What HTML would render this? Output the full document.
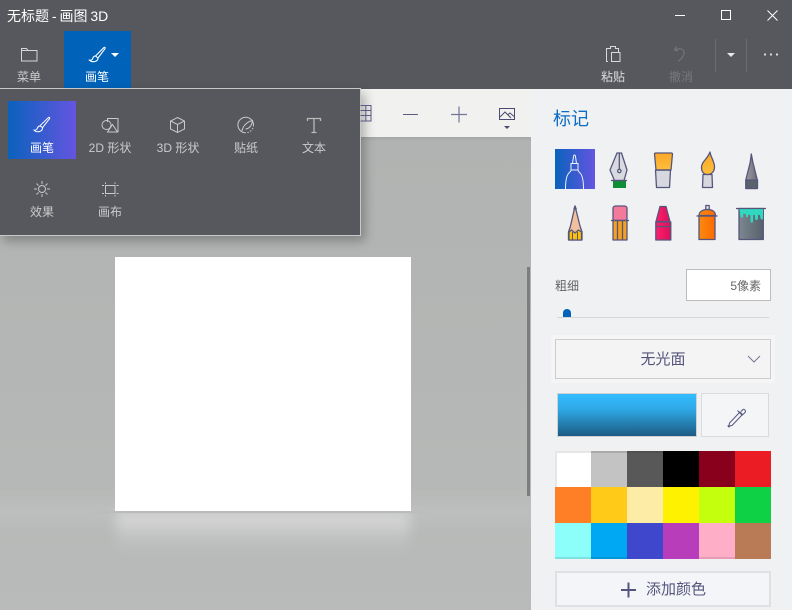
<!DOCTYPE html>
<html lang="zh">
<head>
<meta charset="utf-8">
<title>无标题 - 画图 3D</title>
<style>
html,body{margin:0;padding:0;width:792px;height:610px;overflow:hidden;background:#f0f1f3}
body{position:relative;font-family:"Liberation Sans","Noto Sans CJK SC",sans-serif;font-size:12px}
.a{position:absolute}
.t{position:absolute;white-space:nowrap;line-height:16px;height:16px}
.c{transform:translateX(-50%)}
.l{color:#cbcbcd}
</style>
</head>
<body>
<!-- canvas area -->
<div class="a" style="left:0;top:137px;width:531px;height:473px;overflow:hidden;background:linear-gradient(#b1b3b2,#b5b7b6 60%,#b9bbba)">
<div class="a" style="left:-20px;top:350px;width:571px;height:50px;background:linear-gradient(rgba(255,255,255,0),rgba(255,255,255,.09) 50%,rgba(255,255,255,0));filter:blur(5px)"></div>
<div class="a" style="left:116px;top:375px;width:294px;height:42px;background:linear-gradient(rgba(232,232,232,.7),rgba(215,215,215,.35) 55%,rgba(200,200,200,0));filter:blur(6px)"></div>
</div>
<div class="a" style="left:90px;top:511px;width:345px;height:2px;background:linear-gradient(90deg,rgba(170,170,170,0),#b9b9b8 10%,#b9b9b8 90%,rgba(170,170,170,0))"></div>
<div class="a" style="left:115px;top:257px;width:296px;height:254px;background:#fff"></div>
<div class="a" style="left:527px;top:267px;width:3px;height:229px;background:#7c7e7d"></div>
<!-- toolbar -->
<div class="a" style="left:360px;top:89px;width:171px;height:48px;background:#f1f1f0"></div>
<div class="a" style="left:360px;top:137px;width:171px;height:4px;background:linear-gradient(#a5a7a6,#b1b3b2)"></div>
<!-- top bar -->
<div class="a" style="left:0;top:0;width:792px;height:89px;background:#57585d"></div>
<div class="a" style="left:64px;top:31px;width:67px;height:57px;background:#0062b8"></div>
<!-- side panel -->
<div class="a" style="left:531px;top:89px;width:261px;height:521px;background:#f0f1f3"></div>
<!-- flyout -->
<div class="a" style="left:-1px;top:88px;width:360px;height:146px;background:#57585d;border:1px solid #c9c9c9;box-shadow:4px 5px 10px rgba(0,0,0,.28)"></div>
<div class="a" style="left:8px;top:101px;width:68px;height:58px;background:linear-gradient(90deg,#0a62bd,#6455e0)"></div>
<!-- right controls -->
<div class="a" style="left:686px;top:269px;width:83px;height:30px;background:#fff;border:1px solid #bcbcbc"></div>
<div class="a" style="left:557px;top:317px;width:212px;height:1px;background:#d5d6d9"></div>
<div class="a" style="left:563px;top:309px;width:8px;height:8px;background:#0062b8;border-radius:4px 4px 0 0"></div>
<div class="a" style="left:551px;top:335px;width:224px;height:48px;background:#f5f5f6"></div>
<div class="a" style="left:555px;top:339px;width:214px;height:38px;border:1px solid #cdcdcd;background:#f4f4f5"></div>
<div class="a" style="left:557px;top:393px;width:138px;height:42px;border:1px solid #cfd0d2;background:linear-gradient(#33bcff,#2fa9e8 35%,#2686b8 65%,#1c5a85)"></div>
<div class="a" style="left:701px;top:393px;width:66px;height:42px;border:1px solid #d9dadc;background:#f4f5f7"></div>
<!-- palette -->
<div class="a" style="left:555px;top:451px;width:216px;height:108px;display:grid;grid-template-columns:repeat(6,36px);grid-template-rows:repeat(3,36px)">
<div style="background:#fff;border:2px solid #e6e6e7;border-right:0;border-bottom:0"></div><div style="background:#c3c3c3;border-top:2px solid #aaa"></div><div style="background:#585858;border-top:2px solid #4f4f4f"></div><div style="background:#000"></div><div style="background:#88001b"></div><div style="background:#ec1c24"></div>
<div style="background:#ff7f27"></div><div style="background:#ffca18"></div><div style="background:#fdeca6"></div><div style="background:#fff200"></div><div style="background:#c4ff0e"></div><div style="background:#0ed145"></div>
<div style="background:#8cfffb;border-bottom:2px solid #7de3e0"></div><div style="background:#00a8f3;border-bottom:2px solid #0096d9"></div><div style="background:#3f48cc"></div><div style="background:#b83dba"></div><div style="background:#ffaec8;border-bottom:2px solid #e59cb4"></div><div style="background:#b97a56"></div>
</div>
<div class="a" style="left:555px;top:571px;width:212px;height:32px;border:2px solid #dfe0e3;background:#f4f5f8"></div>

<!-- icons -->
<svg class="a" style="left:0;top:0" width="792" height="610" viewBox="0 0 792 610" fill="none">
<defs>
<linearGradient id="g1" x1="0" x2="1"><stop offset="0" stop-color="#0a62bd"/><stop offset="1" stop-color="#6455e0"/></linearGradient>
<linearGradient id="y" x1="0" y1="0" x2="0" y2="1"><stop offset="0" stop-color="#f9a825"/><stop offset="1" stop-color="#ffbe3d"/></linearGradient>
<linearGradient id="gr" x1="0" x2="1"><stop offset="0" stop-color="#9a9aa2"/><stop offset="1" stop-color="#6d6d76"/></linearGradient>
<linearGradient id="bk" x1="0" x2="1"><stop offset="0" stop-color="#7c8790"/><stop offset="1" stop-color="#57606b"/></linearGradient>
<linearGradient id="pk" x1="0" x2="1"><stop offset="0" stop-color="#ff1f6d"/><stop offset="1" stop-color="#d9105a"/></linearGradient>
<linearGradient id="or" x1="0" x2="1"><stop offset="0" stop-color="#f98a10"/><stop offset="1" stop-color="#ff6a00"/></linearGradient>
</defs>
<!-- window buttons -->
<g stroke="#fff" stroke-width="1">
<path d="M675 15.5h10"/><rect x="721.5" y="10.500" width="9" height="9"/><path d="M767.500 10.500l10 10M777.500 10.500l-10 10"/>
</g>
<!-- folder -->
<path d="M21.500 48.500h5l1.500 2h9v10.500h-15.500z" stroke="#d6d6d8"/>
<path d="M21.500 50.500h6.500" stroke="#d6d6d8"/>
<!-- main brush -->
<g stroke="#fff" stroke-width="1.100">
<path d="M104 47.500c1 -.5 1.500 .2 1 1.200l-7 9.300-2.500-2z"/><path d="M95.500 56c-2 0-2.500 1.500-3 3-.3 1-1 1.200-3 1.200 1.500 1.500 3.500 1.800 5.500 1.300s3-2 3-3.500"/>
</g>
<path d="M111 53h8l-4 4z" fill="#fff"/>
<!-- paste -->
<g stroke="#d9d9db" stroke-width="1">
<path d="M608 61.500h-1.500v-13h4v-2h5v2h3v4"/><rect x="611.500" y="52.500" width="8.500" height="9"/>
</g>
<!-- undo -->
<path d="M676.500 46.500l-2 3.500 3.800 .8M674.800 50c3-2 8.200-1.800 9.200 1.500 .8 3-1.500 6.500-6 10" stroke="#77787c"/>
<path d="M715.500 39v33M746.500 39v33" stroke="#6b6c70"/>
<path d="M727 53h8l-4 4z" fill="#e8e8e8"/>
<g fill="#d8d8da"><rect x="764" y="53.500" width="2" height="2"/><rect x="770" y="53.500" width="2" height="2"/><rect x="776" y="53.500" width="2" height="2"/></g>
<!-- toolbar icons -->
<path d="M360.500 105.500h10.500v15.500h-10.500M360.500 110.500h10.500M360.500 115.500h10.500M365.800 105.500v15.500" stroke="#5b5a80"/>
<path d="M403 114.500h15" stroke="#5b5a80"/>
<path d="M451 114.500h16M459 106.500v16" stroke="#74739a" stroke-width="1.200"/>
<path d="M499.500 108.500h15v11h-15zM500 117l5-5 6 6M508 114.500l2-1.500 4 3.500" stroke="#4b4a72"/>
<path d="M504 126h6l-3 3z" fill="#4b4a72"/>
<!-- flyout icons -->
<g stroke="#fff" stroke-width="1">
<path d="M48.500 117.500c1-.5 1.500.2 1 1.200l-7 9-2.500-2z"/><path d="M40 126c-2 0-2.500 1.500-3 3-.3 1-1 1.200-3 1.200 1.500 1.500 3.500 1.800 5.500 1.300s3-2 3-3.500"/>
</g>
<g stroke="#c9c9cb" stroke-width="1">
<circle cx="106.500" cy="125" r="4.500"/><path d="M107.500 122v-3.500h10.500v13h-1M112.500 124.500l5 7.500h-10z"/>
<path d="M177.500 117.500l7 3.500v8l-7 3.500-7-3.500v-8zM170.500 121l7 3.500 7-3.500M177.500 124.500v8"/>
<path d="M253.500 125a7.800 7.800 0 1 0-7.800 7.800" /><path d="M253.500 125a7.800 7.800 0 0 1-7.800 7.800" stroke-dasharray="1.500 1.500"/><path d="M242 131c.5-4 4-9 10.500-10.500-.5 5-3.500 8.500-7 8.500" />
<path d="M307.500 121v-2.500h13v2.500M314 118.500v14M311.500 132.500h5" stroke="#b9b9bb" stroke-width="1.300"/>
<circle cx="42" cy="189" r="3.500"/><path d="M42 181v3M42 194v3M34 189h3M47 189h3M36.500 183.500l2 2M45.500 192.500l2 2M47.500 183.500l-2 2M38.500 192.500l-2 2"/>
<path d="M105.500 185.500h9.500v8h-9.500zM102 185.500h2M102 193.500h2M116.500 185.500h2M116.500 193.500h2M105.500 182.500v1.500M115 182.500v1.500M105.500 195v1.500M115 195v1.500"/>
</g>
<!-- markers -->
<rect x="555" y="149" width="40" height="40" fill="url(#g1)"/>
<g stroke="#fff" stroke-width="1" opacity=".92">
<path d="M565.500 189c0-7 1-13 3-15.500 1.500-1.500 2.500-2.500 2.500-3.500h7c0 1 1 2 2.500 3.500 2 2.500 3 8.500 3 15.500M571 170v-6.500h7v6.500M572.500 163.500l1-7c.3-2 1.700-2 2 0l1 7"/>
</g>
<g stroke="#56567c" stroke-width="1.300" stroke-linejoin="round">
<!-- fountain -->
<path d="M617 153h4.500l5.500 17-3 10.500h-9.500l-4.500-10.500z" fill="#d9d9e0"/>
<rect x="613" y="181" width="13" height="7" fill="#0f8f35" stroke="none"/>
<path d="M611 180.500h16"/>
<circle cx="619.300" cy="171" r="1.700" fill="#e8e8ee"/><path d="M619.300 153v16"/>
<!-- flat brush -->
<path d="M655.500 170h15l-1 17.500h-13z" fill="#d7d7e0"/>
<path d="M654.500 154c0-.5.500-1 1-1h16c.5 0 1 .5 1 1l-1.500 16h-15z" fill="url(#y)"/>
<path d="M655.500 170h15"/>
<!-- round brush -->
<path d="M703 174.500h9l.5 13h-10z" fill="#d7d7e0"/>
<path d="M710 152c.5 5 4.500 9 4.500 15 0 4.500-3 7.500-7 7.500s-6-3-6-7c0-6 6.500-9 8.500-15.500z" fill="url(#y)"/>
<!-- marker -->
<path d="M751.300 154l1.500 8 4.500 18v8.500h-11.500v-8.500l4.500-18z" fill="url(#gr)"/>
<path d="M746 180h11.500v8.500h-11.500z" fill="#5a626c"/>
<!-- pencil -->
<path d="M575 206l5 20 2 6v8h-13.500v-8l2-6z" fill="#f2c09c"/>
<path d="M574 209l1-3 1.200 3z" fill="#56567c"/>
<path d="M569 232l2.500-2 3.500 3 3.500-3 3 2v8h-12.500z" fill="#ffc107"/>
<path d="M572.500 232v8M577.500 232v8" stroke-width="1"/>
<!-- eraser pencil -->
<path d="M613 220.500v-12c0-1.500 1-2.500 2.500-2.500h9c1.500 0 2.500 1 2.500 2.500v12z" fill="#f47a9c"/>
<rect x="613" y="220.500" width="14" height="19.500" fill="#f5a020"/>
<path d="M611 220.500h18M617.500 221v19M622.500 221v19"/>
<!-- crayon -->
<path d="M660 206.500h6l4 15h-14z" fill="url(#pk)"/>
<rect x="655.800" y="222" width="15" height="18" fill="url(#pk)"/>
<path d="M656 226.500h15"/>
<!-- spray -->
<rect x="705.800" y="205.500" width="3.400" height="4" fill="#e8e8ee"/>
<path d="M699 215.500c0-4 4-6 8.500-6s8 2 8 6z" fill="url(#or)"/>
<rect x="699" y="216" width="16" height="23.500" fill="url(#or)"/>
<path d="M696.500 216h21"/>
<!-- bucket -->
<rect x="739" y="208.500" width="24.300" height="31" fill="url(#bk)"/>
<path d="M739.500 209h23.500v9.500c0 1.500-2 1.500-2.500 0l-.5-3c-.5-1-2-1-2 0v3c0 2-3 2-3 0v-3c0-1-2-1-2 0v6c0 1.500-2.500 1.500-2.500 0v-6c0-1-2.500-1-2.500 0v1c0 1-2 1-2 0v-2c0-1-3-1-3 0v2.500c0 1-2 1-2.500-.5z" fill="#2fd8be" stroke="none"/>
<path d="M736 208.500h30"/>
</g>
<!-- chevron -->
<path d="M748 356l6 6 6-6" stroke="#77768f"/>
<!-- eyedropper -->
<g stroke="#55557c" stroke-width="1">
<path d="M740 412l-10.500 11-.5 2.500-1 .5 1 1 .5-1 2.500-.5 10.500-11z"/>
<path d="M737.500 410.500l5 5M741 411.500l2-2c1-1 3.500 1.500 2 3l-2 2"/>
</g>
<!-- add plus -->
<path d="M621 590h15M628.500 582.500v15" stroke="#55557c" stroke-width="2"/>
</svg>

<!-- text -->
<div class="t" style="left:7px;top:8px;font-size:14px;color:#fff;word-spacing:-1px">无标题 - 画图 3D</div>
<div class="t c l" style="left:29px;top:69px">菜单</div>
<div class="t c" style="left:97px;top:69px;color:#fff">画笔</div>
<div class="t c" style="left:613px;top:69px;color:#dcdcde">粘贴</div>
<div class="t c" style="left:681px;top:69px;color:#77787c">撤消</div>

<div class="t c" style="left:42px;top:140px;color:#fff">画笔</div>
<div class="t c l" style="left:110px;top:140px">2D 形状</div>
<div class="t c l" style="left:178px;top:140px">3D 形状</div>
<div class="t c l" style="left:246px;top:140px">贴纸</div>
<div class="t c l" style="left:314px;top:140px">文本</div>
<div class="t c l" style="left:42px;top:204px">效果</div>
<div class="t c l" style="left:110px;top:204px">画布</div>

<div class="t" style="left:553px;top:108px;font-size:18px;line-height:22px;height:22px;color:#0a6cc4">标记</div>
<div class="t" style="left:555px;top:278px;color:#666668">粗细</div>
<div class="t" style="right:31px;top:278px;color:#666668">5像素</div>
<div class="t c" style="left:663px;top:352px;font-size:15px;color:#55557c">无光面</div>
<div class="t" style="left:646px;top:582px;font-size:15px;color:#55557c">添加颜色</div>
</body>
</html>
